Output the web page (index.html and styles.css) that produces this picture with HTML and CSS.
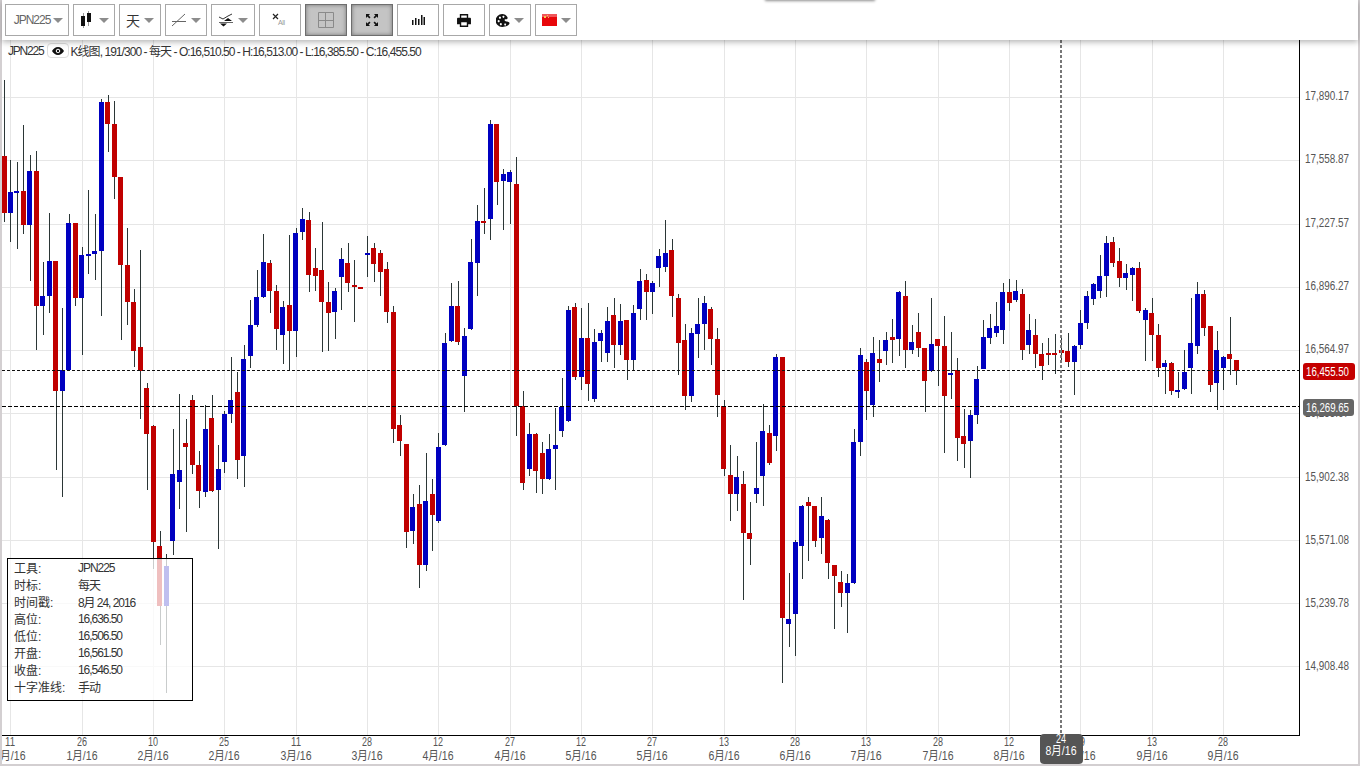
FILE: index.html
```html
<!DOCTYPE html>
<html lang="zh">
<head>
<meta charset="utf-8">
<title>JPN225</title>
<link rel="stylesheet" href="styles.css">
</head>
<body>
<div class="app">
  <header class="toolbar">
    <button class="tool tool-wide"><span class="tool-text">JPN225</span><i class="caret"></i></button>
    <button class="tool"><svg class="ico" width="16" height="20" viewBox="0 0 16 20"><path class="i-thin" d="M4.5 3V18M9.5 1V16"/><path class="i-fill" d="M2 6h4v10H2zM8 3h4v9H8z"/></svg><i class="caret"></i></button>
    <button class="tool"><span class="tool-cjk">天</span><i class="caret"></i></button>
    <button class="tool"><svg class="ico" width="16" height="14" viewBox="0 0 16 14"><path class="i-line" d="M1 8.5H15M1 13 14 1"/></svg><i class="caret"></i></button>
    <button class="tool tool-44"><svg class="ico" width="15" height="14" viewBox="0 0 15 14"><path class="i-line-d" d="M0 4 4 6 9 3 13 1"/><path class="i-fill" d="M5 8h8L9 5zM1 10.500h7L4.500 13.500z"/><path class="i-line" d="M0 9.500h14"/></svg><i class="caret"></i></button>
    <button class="tool"><svg class="ico" width="16" height="14" viewBox="0 0 16 14"><path class="i-x" d="M1 1 6 6M6 1 1 6"/><text class="i-all" x="6" y="12">All</text></svg></button>
    <button class="tool tool-on"><svg class="ico" width="18" height="18" viewBox="0 0 18 18"><path class="i-grid" d="M1.500 1.500H16.500V16.500H1.500ZM1.500 9.500H16.500M8.500 1.500V16.500"/></svg></button>
    <button class="tool tool-on"><svg class="ico" width="14" height="14" viewBox="0 0 14 14"><path class="i-fill" d="M1 1h4L3.600 2.400 5.500 4.300 4.300 5.500 2.400 3.600 1 5zM13 1v4L11.600 3.600 9.700 5.500 8.500 4.300 10.400 2.400 9 1zM1 13V9l1.400 1.400 1.900-1.900 1.200 1.200-1.900 1.900L5 13zM13 13H9l1.400-1.400-1.900-1.900 1.200-1.200 1.900 1.900L13 9z"/></svg></button>
    <button class="tool"><svg class="ico" width="14" height="12" viewBox="0 0 14 12"><path class="i-fill" d="M1 6h1.500v5H1zM4 4h1.500v7H4zM7 5h1.500v6H7zM10 1h1.500v10H10zM12.500 3H14v8h-1.500z"/></svg></button>
    <button class="tool"><svg class="ico" width="14" height="13" viewBox="0 0 15 14"><path class="i-fill" fill-rule="evenodd" d="M3 0h9v4h2a1 1 0 0 1 1 1v6h-3v3H3v-3H0V5a1 1 0 0 1 1-1h2zM4.500 1.500V4h6V1.500zM4.500 9v3.500h6V9z"/></svg></button>
    <button class="tool"><svg class="ico" width="14" height="13" viewBox="0 0 16 15"><path class="i-fill" d="M7 0a7 7 0 0 1 6 3.500c.8 1.500 0 2.500-1.500 2.500H11c-1.500 0-1.500 1.500-.5 2 1.500.8 5 .5 5 2.500 0 2.500-4 4.500-8.500 4.500A7.500 7.500 0 0 1 7 0z"/><path class="i-hole" d="M4.500 3a1.200 1.200 0 1 0 .01 0zM8.500 2a1.100 1.100 0 1 0 .01 0zM3 7a1.200 1.200 0 1 0 .01 0zM5.500 10.500a1.200 1.200 0 1 0 .01 0zM10.500 11a1.100 1.100 0 1 0 .01 0z"/></svg><i class="caret"></i></button>
    <button class="tool"><svg class="ico" width="15" height="12" viewBox="0 0 15 12"><rect class="i-flag" width="15" height="12"/><rect class="i-flag-top" width="15" height="3"/><path class="i-star" d="M2 2h2v2H2zM5 1h1v1H5zM6 3h1v1H6z"/></svg><i class="caret"></i></button>
    <span class="peek"></span>
  </header>

  <main class="chart">
    <svg class="plot" width="1356" height="724" viewBox="2 40 1356 724">
      <path class="grid" d="M10.500 40V735M82.500 40V735M153.500 40V735M224.500 40V735M296.500 40V735M367.500 40V735M438.500 40V735M510.500 40V735M581.500 40V735M652.500 40V735M724.500 40V735M795.500 40V735M866.500 40V735M938.500 40V735M1009.500 40V735M1080.500 40V735M1152.500 40V735M1223.500 40V735M2 97.500H1299M2 160.500H1299M2 224.500H1299M2 287.500H1299M2 350.500H1299M2 413.500H1299M2 477.500H1299M2 540.500H1299M2 603.500H1299M2 666.500H1299"/>
      <path class="wick" d="M4.500 80V222M10.500 160V242M17.500 162V249M23.500 125V234M30.500 155V281M36.500 151V350M43.500 262V335M49.500 213V313M56.500 261V470M62.500 308V497M69.500 214V370M75.500 223V306M82.500 247V355M88.500 190V274M95.500 214V280M101.500 99V316M108.500 95V152M114.500 101V199M121.500 177V340M127.500 228V325M134.500 289V367M140.500 250V419M147.500 383V490M153.500 425V569M160.500 531V645M166.500 554V693M173.500 429V555M179.500 394V509M186.500 419V532M192.500 395V474M199.500 451V508M205.500 405V497M212.500 395V492M218.500 445V549M224.500 411V473M231.500 357V423M237.500 372V479M244.500 345V487M250.500 300V368M257.500 270V327M263.500 234V298M270.500 260V313M276.500 285V350M283.500 301V364M289.500 235V370M296.500 228V357M302.500 208V240M309.500 212V292M315.500 248V291M322.500 222V352M328.500 282V351M335.500 288V339M341.500 248V310M348.500 243V292M354.500 260V322M367.500 236V277M374.500 243V282M380.500 250V296M387.500 262V323M393.500 306V443M400.500 415V456M406.500 444V548M413.500 494V544M419.500 485V588M426.500 453V571M432.500 479V551M438.500 433V523M445.500 333V446M451.500 283V342M458.500 281V345M464.500 328V412M471.500 239V330M477.500 205V296M484.500 188V234M490.500 120V240M497.500 124V205M503.500 169V230M510.500 170V224M516.500 157V436M523.500 391V490M529.500 423V476M536.500 433V493M542.500 442V494M549.500 434V480M555.500 408V490M562.500 378V437M568.500 306V422M575.500 303V380M581.500 308V390M588.500 303V401M594.500 329V402M601.500 330V362M607.500 307V362M614.500 298V368M620.500 304V355M627.500 320V380M633.500 305V371M640.500 269V320M646.500 274V320M652.500 281V314M659.500 249V287M665.500 220V272M672.500 239V317M678.500 294V375M685.500 324V410M691.500 328V402M698.500 298V358M704.500 296V350M711.500 307V365M717.500 328V417M724.500 400V476M730.500 445V521M737.500 456V511M743.500 471V600M750.500 502V565M756.500 442V503M763.500 404V506M769.500 425V465M776.500 354V451M782.500 357V683M789.500 573V647M795.500 540V656M802.500 505V579M808.500 497V561M815.500 506V547M821.500 497V554M828.500 519V579M834.500 565V629M841.500 571V607M847.500 574V633M854.500 429V584M860.500 348V456M866.500 359V420M873.500 337V417M879.500 340V382M886.500 332V365M892.500 319V363M899.500 291V356M905.500 281V368M912.500 325V354M918.500 313V357M925.500 348V412M931.500 298V372M938.500 339V386M944.500 316V453M951.500 332V399M957.500 358V461M964.500 409V468M970.500 410V478M977.500 366V424M983.500 320V369M990.500 314V344M996.500 302V337M1003.500 283V344M1009.500 279V311M1016.500 280V302M1022.500 289V360M1029.500 314V354M1035.500 319V368M1042.500 343V380M1048.500 338V365M1055.500 334V374M1061.500 336V362M1068.500 333V367M1074.500 345V395M1080.500 310V349M1087.500 291V329M1093.500 283V305M1100.500 255V298M1106.500 236V297M1113.500 237V267M1119.500 248V287M1126.500 264V290M1132.500 267V301M1139.500 262V313M1145.500 308V361M1152.500 298V361M1158.500 324V377M1165.500 360V394M1171.500 362V395M1178.500 372V398M1184.500 350V390M1191.500 298V394M1197.500 282V354M1204.500 290V336M1210.500 326V392M1217.500 331V410M1223.500 356V390M1230.500 317V375M1236.500 360V385"/>
      <path class="body-red" d="M4.500 156V213M23.500 191V225M36.500 171V306M55.500 261V391M75.500 223V298M107.500 102V124M114.500 124V177M120.500 177V265M127.500 265V302M133.500 302V351M140.500 347V371M146.500 388V434M153.500 426V542M159.500 546V606M185.500 443V447M192.500 400V465M198.500 465V491M211.500 418V491M237.500 392V460M269.500 263V291M276.500 291V329M289.500 305V331M308.500 220V275M315.500 268V276M321.500 270V302M328.500 302V313M347.500 263V283M354.500 285V287M360.500 287V289M373.500 248V264M380.500 253V272M386.500 269V312M393.500 312V429M399.500 425V441M406.500 444V532M419.500 504V565M432.500 494V515M457.500 306V342M483.500 221V223M496.500 124V182M516.500 184V406M522.500 406V483M535.500 434V471M542.500 453V479M574.500 307V377M587.500 338V384M613.500 315V345M626.500 320V360M646.500 280V292M671.500 250V296M678.500 298V343M684.500 340V396M710.500 309V339M717.500 339V395M723.500 406V469M730.500 475V494M743.500 484V533M749.500 533V539M769.500 433V463M782.500 357V618M808.500 502V506M814.500 506V541M827.500 520V563M834.500 565V576M840.500 582V593M866.500 362V391M879.500 359V363M892.500 337V340M905.500 296V350M918.500 332V348M924.500 348V381M937.500 339V346M944.500 346V396M957.500 370V438M963.500 436V444M1009.500 292V303M1022.500 294V350M1035.500 335V354M1041.500 354V366M1048.500 353V355M1054.500 353V355M1061.500 350V353M1067.500 351V362M1112.500 242V263M1119.500 261V278M1138.500 268V311M1151.500 313V335M1158.500 335V368M1171.500 363V391M1203.500 294V328M1210.500 326V385M1229.500 354V359M1236.500 360V371"/>
      <path class="body-blue" d="M10.500 192V213M16.500 191V193M29.500 171V225M42.500 296V306M49.500 261V296M62.500 370V391M68.500 223V370M81.500 255V298M88.500 254V256M94.500 251V254M101.500 102V251M166.500 566V606M172.500 474V541M179.500 470V482M205.500 429V492M218.500 469V490M224.500 414V462M230.500 400V414M243.500 359V456M250.500 325V356M256.500 297V325M263.500 262V297M282.500 307V335M295.500 233V331M302.500 219V232M334.500 291V312M341.500 259V277M367.500 253V255M412.500 507V531M425.500 501V565M438.500 447V521M444.500 343V445M451.500 306V341M464.500 336V376M470.500 262V329M477.500 221V263M490.500 124V219M503.500 174V181M509.500 172V182M529.500 434V469M548.500 449V479M555.500 445V449M561.500 407V431M568.500 310V421M581.500 338V377M594.500 342V399M600.500 333V341M607.500 321V353M620.500 321V345M633.500 313V360M639.500 281V309M652.500 283V292M658.500 256V268M665.500 253V267M691.500 333V396M697.500 324V334M704.500 303V324M736.500 477V494M756.500 488V494M762.500 431V476M775.500 357V436M788.500 619V624M795.500 542V614M801.500 506V546M821.500 516V538M847.500 583V593M853.500 442V583M860.500 355V442M872.500 353V405M885.500 340V351M898.500 292V339M911.500 342V350M931.500 344V371M950.500 373V375M970.500 415V441M976.500 379V415M983.500 337V369M989.500 328V338M996.500 326V333M1002.500 292V330M1015.500 291V300M1028.500 330V345M1074.500 346V362M1080.500 323V345M1086.500 296V323M1093.500 284V299M1099.500 276V291M1106.500 243V276M1125.500 273V278M1132.500 268V275M1145.500 310V320M1164.500 363V367M1177.500 390V392M1184.500 372V389M1190.500 343V368M1197.500 294V346M1216.500 350V383M1223.500 357V368"/>

      <path class="level-a" d="M2 370.500H1300"/>
      <path class="level-b" d="M2 406.500H1300"/>
      <path class="axis" d="M2 735.500H1300M1299.500 40V735"/>
      <path class="cross" d="M1061 40V735"/>

      <g class="y-labels">
        <text x="1305" y="100" textLength="44" lengthAdjust="spacingAndGlyphs">17,890.17</text>
        <text x="1305" y="163" textLength="44" lengthAdjust="spacingAndGlyphs">17,558.87</text>
        <text x="1305" y="227" textLength="44" lengthAdjust="spacingAndGlyphs">17,227.57</text>
        <text x="1305" y="290" textLength="44" lengthAdjust="spacingAndGlyphs">16,896.27</text>
        <text x="1305" y="353" textLength="44" lengthAdjust="spacingAndGlyphs">16,564.97</text>
        <text x="1305" y="417" textLength="44" lengthAdjust="spacingAndGlyphs">16,233.67</text>
        <text x="1305" y="481" textLength="44" lengthAdjust="spacingAndGlyphs">15,902.38</text>
        <text x="1305" y="544" textLength="44" lengthAdjust="spacingAndGlyphs">15,571.08</text>
        <text x="1305" y="607" textLength="44" lengthAdjust="spacingAndGlyphs">15,239.78</text>
        <text x="1305" y="670" textLength="44" lengthAdjust="spacingAndGlyphs">14,908.48</text>
      </g>

      <rect class="tag-red" x="1303" y="363" width="52" height="17" rx="3"/>
      <text class="tag-text" x="1306" y="376" textLength="43" lengthAdjust="spacingAndGlyphs">16,455.50</text>
      <rect class="tag-grey" x="1303" y="399" width="51" height="17" rx="3"/>
      <text class="tag-text" x="1306" y="412" textLength="43" lengthAdjust="spacingAndGlyphs">16,269.65</text>

      <g class="x-labels">
        <text x="10" y="746" textLength="10" lengthAdjust="spacingAndGlyphs">11</text><text x="10" y="760" textLength="31" lengthAdjust="spacingAndGlyphs">1月/16</text>
        <text x="82" y="746" textLength="10" lengthAdjust="spacingAndGlyphs">26</text><text x="82" y="760" textLength="31" lengthAdjust="spacingAndGlyphs">1月/16</text>
        <text x="153" y="746" textLength="10" lengthAdjust="spacingAndGlyphs">10</text><text x="153" y="760" textLength="31" lengthAdjust="spacingAndGlyphs">2月/16</text>
        <text x="224" y="746" textLength="10" lengthAdjust="spacingAndGlyphs">25</text><text x="224" y="760" textLength="31" lengthAdjust="spacingAndGlyphs">2月/16</text>
        <text x="296" y="746" textLength="10" lengthAdjust="spacingAndGlyphs">11</text><text x="296" y="760" textLength="31" lengthAdjust="spacingAndGlyphs">3月/16</text>
        <text x="367" y="746" textLength="10" lengthAdjust="spacingAndGlyphs">28</text><text x="367" y="760" textLength="31" lengthAdjust="spacingAndGlyphs">3月/16</text>
        <text x="438" y="746" textLength="10" lengthAdjust="spacingAndGlyphs">12</text><text x="438" y="760" textLength="31" lengthAdjust="spacingAndGlyphs">4月/16</text>
        <text x="510" y="746" textLength="10" lengthAdjust="spacingAndGlyphs">27</text><text x="510" y="760" textLength="31" lengthAdjust="spacingAndGlyphs">4月/16</text>
        <text x="581" y="746" textLength="10" lengthAdjust="spacingAndGlyphs">12</text><text x="581" y="760" textLength="31" lengthAdjust="spacingAndGlyphs">5月/16</text>
        <text x="652" y="746" textLength="10" lengthAdjust="spacingAndGlyphs">27</text><text x="652" y="760" textLength="31" lengthAdjust="spacingAndGlyphs">5月/16</text>
        <text x="724" y="746" textLength="10" lengthAdjust="spacingAndGlyphs">13</text><text x="724" y="760" textLength="31" lengthAdjust="spacingAndGlyphs">6月/16</text>
        <text x="795" y="746" textLength="10" lengthAdjust="spacingAndGlyphs">28</text><text x="795" y="760" textLength="31" lengthAdjust="spacingAndGlyphs">6月/16</text>
        <text x="866" y="746" textLength="10" lengthAdjust="spacingAndGlyphs">13</text><text x="866" y="760" textLength="31" lengthAdjust="spacingAndGlyphs">7月/16</text>
        <text x="938" y="746" textLength="10" lengthAdjust="spacingAndGlyphs">28</text><text x="938" y="760" textLength="31" lengthAdjust="spacingAndGlyphs">7月/16</text>
        <text x="1009" y="746" textLength="10" lengthAdjust="spacingAndGlyphs">12</text><text x="1009" y="760" textLength="31" lengthAdjust="spacingAndGlyphs">8月/16</text>
        <text x="1080" y="746" textLength="10" lengthAdjust="spacingAndGlyphs">29</text><text x="1080" y="760" textLength="31" lengthAdjust="spacingAndGlyphs">8月/16</text>
        <text x="1152" y="746" textLength="10" lengthAdjust="spacingAndGlyphs">13</text><text x="1152" y="760" textLength="31" lengthAdjust="spacingAndGlyphs">9月/16</text>
        <text x="1223" y="746" textLength="10" lengthAdjust="spacingAndGlyphs">28</text><text x="1223" y="760" textLength="31" lengthAdjust="spacingAndGlyphs">9月/16</text>
      </g>
      <rect class="date-tag" x="1040" y="734" width="43" height="30" rx="4"/>
      <text class="date-text" x="1061" y="743" textLength="10" lengthAdjust="spacingAndGlyphs">24</text>
      <text class="date-text" x="1061" y="755" textLength="31" lengthAdjust="spacingAndGlyphs">8月/16</text>
    </svg>

    <div class="status">
      <span class="sym">JPN225</span>
      <span class="eye"><svg width="12" height="8" viewBox="0 0 12 8"><path class="i-fill" fill-rule="evenodd" d="M6 0c2.600 0 4.800 1.800 6 4-1.200 2.200-3.400 4-6 4S1.200 6.200 0 4c1.200-2.200 3.400-4 6-4zm0 1.800a2.200 2.200 0 1 0 .01 0z"/><circle class="i-fill" cx="6" cy="4" r="1.200"/></svg></span>
      <span class="info">K线图, 191/300 - 每天 - O:16,510.50 - H:16,513.00 - L:16,385.50 - C:16,455.50</span>
    </div>

    <dl class="legend">
      <dt>工具:</dt><dd>JPN225</dd>
      <dt>时标:</dt><dd>每天</dd>
      <dt>时间戳:</dt><dd>8月 24, 2016</dd>
      <dt>高位:</dt><dd>16,636.50</dd>
      <dt>低位:</dt><dd>16,506.50</dd>
      <dt>开盘:</dt><dd>16,561.50</dd>
      <dt>收盘:</dt><dd>16,546.50</dd>
      <dt>十字准线:</dt><dd>手动</dd>
    </dl>
  </main>
</div>
</body>
</html>
```

FILE: styles.css
```css
* { box-sizing: border-box; }

html, body {
  margin: 0;
  height: 100%;
  overflow: hidden;
}

body {
  background: #d3cfd1;
  font-family: "Liberation Sans", "Noto Sans CJK SC", sans-serif;
  font-size: 12px;
  color: #444;
}

.app {
  height: 766px;
  padding: 0 2px 2px;
  display: flex;
  flex-direction: column;
}

.toolbar {
  position: relative;
  z-index: 2;
  flex: 0 0 40px;
  display: flex;
  gap: 4px;
  padding: 4px 3px 0;
  background: #fff;
  box-shadow: 0 2px 6px rgba(0, 0, 0, .3);
}

.peek {
  position: absolute;
  left: 763px;
  top: -6px;
  width: 110px;
  height: 6px;
  box-shadow: 0 1px 3px rgba(0, 0, 0, .45);
}

.tool {
  flex: 0 0 42px;
  height: 32px;
  padding: 0;
  display: flex;
  align-items: center;
  justify-content: center;
  gap: 4px;
  background: #fff;
  border: 1px solid #a8a8a8;
  font: inherit;
  color: #555;
}

.tool-wide { flex-basis: 64px; gap: 3px; padding-left: 3px; }
.tool-44 { flex-basis: 44px; }

.tool-on {
  background: #c4c4c4;
  border-color: #6e6e6e;
  box-shadow: inset 0 0 4px #777;
}

.tool-text {
  letter-spacing: -1px;
  color: #666;
}

.tool-cjk {
  font-size: 14px;
  color: #333;
}

.caret {
  width: 0;
  height: 0;
  border-style: solid;
  border-width: 5px 5px 0;
  border-color: #8c8c8c transparent transparent;
}

.ico { display: block; flex: none; }

.i-thin { fill: none; stroke: #999; stroke-width: 1; }
.i-fill { fill: #111; }
.i-hole { fill: #fff; }
.i-line { fill: none; stroke: #666; stroke-width: 1; }
.i-line-d { fill: none; stroke: #333; stroke-width: 1; }
.i-x { fill: none; stroke: #222; stroke-width: 1.2; }
.i-all { font-size: 7px; fill: #999; letter-spacing: -.3px; }
.i-grid { fill: none; stroke: #8a8a8a; stroke-width: 1; }
.i-flag { fill: #e8060a; }
.i-flag-top { fill: #f0565a; }
.i-star { fill: #f6c84a; }

.chart {
  position: relative;
  flex: 1;
  background: #fff;
}

.plot {
  display: block;
  background: #fff;
}

.grid { fill: none; stroke: #e6e6e6; stroke-width: 1; shape-rendering: crispEdges; }
.wick { fill: none; stroke: #2b3636; stroke-width: 1; shape-rendering: crispEdges; }
.body-red { fill: none; stroke: #c00000; stroke-width: 5; shape-rendering: crispEdges; }
.body-blue { fill: none; stroke: #0000c0; stroke-width: 5; shape-rendering: crispEdges; }
.level-a { fill: none; stroke: #111; stroke-width: 1; stroke-dasharray: 3 2; shape-rendering: crispEdges; }
.level-b { fill: none; stroke: #000; stroke-width: 1; stroke-dasharray: 4 2; shape-rendering: crispEdges; }
.axis { fill: none; stroke: #000; stroke-width: 1; shape-rendering: crispEdges; }
.cross { fill: none; stroke: #777; stroke-width: 2; stroke-dasharray: 3 2; shape-rendering: crispEdges; }

.y-labels text { font-size: 12px; fill: #555; }
.x-labels text { font-size: 12px; fill: #555; text-anchor: middle; }

.tag-red { fill: #c40000; }
.tag-grey { fill: #666; }
.tag-text { font-size: 12px; font-weight: 400; fill: #fff; }
.date-tag { fill: #555; }
.date-text { font-size: 12px; fill: #fff; text-anchor: middle; }

.status {
  position: absolute;
  left: 6px;
  top: 2px;
  display: flex;
  align-items: center;
  color: #333;
  white-space: nowrap;
}

.sym { letter-spacing: -1.2px; }
.info { letter-spacing: -.95px; }

.eye {
  width: 22px;
  height: 15px;
  margin: 0 2px 0 3px;
  display: flex;
  align-items: center;
  justify-content: center;
  background: #fff;
  border: 1px solid #ddd;
  border-radius: 4px;
}

.legend {
  position: absolute;
  left: 5px;
  top: 518px;
  width: 186px;
  height: 143px;
  margin: 0;
  padding: 0 6px;
  display: grid;
  grid-template-columns: 64px 1fr;
  grid-auto-rows: 17px;
  align-items: center;
  background: rgba(255, 255, 255, .75);
  border: 1px solid #000;
  color: #333;
  letter-spacing: -1.05px;
}

.legend dt, .legend dd { margin: 0; white-space: nowrap; }
.legend dt { letter-spacing: 0; }
```
